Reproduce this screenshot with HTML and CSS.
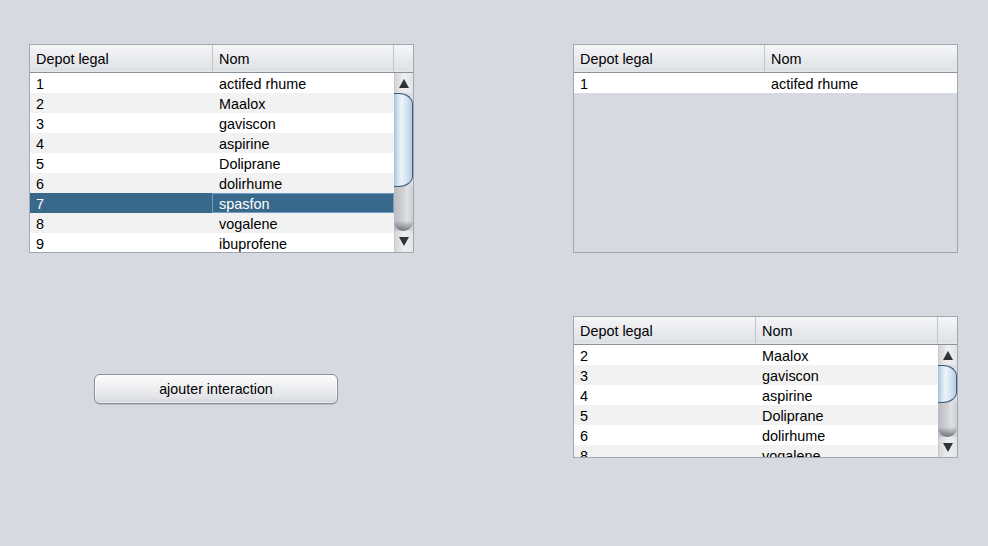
FILE: index.html
```html
<!DOCTYPE html>
<html>
<head>
<meta charset="utf-8">
<link rel="stylesheet" href="styles.css">
</head>
<body>
<div class="page">
  <div class="table t1">
    <div class="thead">
      <div class="th c1">Depot legal</div>
      <div class="th c2">Nom</div>
      <div class="th corner"></div>
    </div>
    <div class="tbody">
      <div class="rows">
        <div class="row"><div class="td c1">1</div><div class="td c2">actifed rhume</div></div>
        <div class="row alt"><div class="td c1">2</div><div class="td c2">Maalox</div></div>
        <div class="row"><div class="td c1">3</div><div class="td c2">gaviscon</div></div>
        <div class="row alt"><div class="td c1">4</div><div class="td c2">aspirine</div></div>
        <div class="row"><div class="td c1">5</div><div class="td c2">Doliprane</div></div>
        <div class="row alt"><div class="td c1">6</div><div class="td c2">dolirhume</div></div>
        <div class="row sel"><div class="td c1">7</div><div class="td c2 focus">spasfon</div></div>
        <div class="row alt"><div class="td c1">8</div><div class="td c2">vogalene</div></div>
        <div class="row"><div class="td c1">9</div><div class="td c2">ibuprofene</div></div>
      </div>
      <div class="sb">
        <div class="sb-btn"><span class="arr up"></span></div>
        <div class="sb-thumb"></div>
        <div class="sb-track"></div>
        <div class="sb-btn down"><span class="arr dn"></span></div>
      </div>
    </div>
  </div>

  <div class="table t2">
    <div class="thead">
      <div class="th c1">Depot legal</div>
      <div class="th c2 last">Nom</div>
    </div>
    <div class="tbody">
      <div class="rows">
        <div class="row"><div class="td c1">1</div><div class="td c2">actifed rhume</div></div>
      </div>
    </div>
  </div>

  <div class="btn-cell">
    <button class="btn" type="button">ajouter interaction</button>
  </div>

  <div class="table t3">
    <div class="thead">
      <div class="th c1">Depot legal</div>
      <div class="th c2">Nom</div>
      <div class="th corner"></div>
    </div>
    <div class="tbody">
      <div class="rows">
        <div class="row"><div class="td c1">2</div><div class="td c2">Maalox</div></div>
        <div class="row alt"><div class="td c1">3</div><div class="td c2">gaviscon</div></div>
        <div class="row"><div class="td c1">4</div><div class="td c2">aspirine</div></div>
        <div class="row alt"><div class="td c1">5</div><div class="td c2">Doliprane</div></div>
        <div class="row"><div class="td c1">6</div><div class="td c2">dolirhume</div></div>
        <div class="row alt"><div class="td c1">8</div><div class="td c2">vogalene</div></div>
      </div>
      <div class="sb">
        <div class="sb-btn"><span class="arr up"></span></div>
        <div class="sb-thumb"></div>
        <div class="sb-track"></div>
        <div class="sb-btn down"><span class="arr dn"></span></div>
      </div>
    </div>
  </div>
</div>
</body>
</html>
```

FILE: styles.css
```css
* { box-sizing: border-box; }
html, body {
  margin: 0;
  padding: 0;
  background: #d6d9df;
  width: 988px;
  height: 546px;
  overflow: hidden;
}
body {
  font-family: "Liberation Sans", Arial, sans-serif;
  font-size: 14.4px;
  color: #000;
}
.page {
  display: grid;
  grid-template-columns: 385px 385px;
  column-gap: 159px;
  align-items: start;
  padding: 44px 0 0 29px;
}

/* table */
.table {
  border: 1px solid #a3a7af;
  display: flex;
  flex-direction: column;
  background: #d6d9df;
  overflow: hidden;
}
.t1, .t2 { height: 209px; }
.t3 { height: 142px; margin-top: 63px; }

.thead {
  display: flex;
  height: 28px;
  border-bottom: 1px solid #8d929a;
  background: linear-gradient(#f5f6f8 0%, #eceef1 35%, #e1e4e8 80%, #dcdfe4 96%, #eef0f2 100%);
  flex: none;
}
.th {
  height: 27px;
  line-height: 29px;
  padding-left: 6px;
  border-right: 1px solid #c3c6cc;
  white-space: nowrap;
  overflow: hidden;
}
.th.last { border-right: none; flex: 1; }
.th.corner { border-right: none; flex: 1; padding: 0; }
.t1 .th.c1 { width: 183px; }
.t1 .th.c2 { width: 181px; }
.t3 .th.c1 { width: 182px; }
.t3 .th.c2 { width: 182px; }
.t2 .th.c1 { width: 191px; }

.tbody {
  flex: 1;
  display: flex;
  min-height: 0;
}
.rows {
  flex: 1;
  overflow: hidden;
}
.row {
  display: flex;
  height: 20px;
  background: #fff;
}
.row.alt { background: #f2f2f2; }
.row.sel { background: #39698a; color: #fff; }
.td {
  height: 20px;
  line-height: 22px;
  padding-left: 6px;
  white-space: nowrap;
  overflow: hidden;
}
.td.c2 {
  flex: 1;
  padding-left: 6px;
  border: 1px solid transparent;
  line-height: 20px;
}
.td.focus { border-color: #6f9fc9; }
.t1 .td.c1 { width: 182px; }
.t3 .td.c1 { width: 181px; }
.t2 .td.c1 { width: 190px; }

/* scrollbar */
.sb {
  width: 19px;
  flex: none;
  display: flex;
  flex-direction: column;
  background: #dcdee2;
}
.sb-btn {
  height: 20px;
  flex: none;
  display: flex;
  align-items: center;
  justify-content: center;
  background: linear-gradient(to right, #d4d6db, #eceef0 50%, #e2e4e7);
  border-left: 1px solid #c7cace;
}
.sb-btn.down { height: 21px; }
.t3 .sb-btn.down { height: 20px; }
.arr {
  width: 0;
  height: 0;
  border-left: 5px solid transparent;
  border-right: 5px solid transparent;
}
.arr.up { border-bottom: 9px solid #2f3236; }
.arr.dn { border-top: 9px solid #2f3236; }

.sb-thumb {
  height: 94px;
  flex: none;
  border: 1px solid #3f5b75;
  border-left: none;
  border-radius: 0 14px 14px 0 / 0 11px 11px 0;
  background: linear-gradient(to right, #a6c0d8 0%, #d2e1ef 22%, #eef4fa 42%, #d6e5f2 68%, #b6cde3 100%);
}
.t3 .sb-thumb { height: 38px; }
.sb-track {
  flex: 1;
  position: relative;
  background: linear-gradient(to right, #b8bbc1 0%, #ccced3 40%, #dddfe2 70%, #cbcdd2 100%);
}
.sb-track::after {
  content: "";
  position: absolute;
  left: 0;
  right: 0;
  bottom: 0;
  height: 10px;
  border-radius: 0 0 10px 10px;
  background: linear-gradient(to bottom, rgba(90,92,96,0), rgba(60,62,66,0.65));
}

/* button */
.btn-cell {
  padding: 121px 0 0 65px;
}
.btn {
  display: block;
  width: 244px;
  height: 30px;
  padding: 0;
  margin: 0;
  border: 1px solid #8b9098;
  border-radius: 6px;
  font-family: "Liberation Sans", Arial, sans-serif;
  font-size: 14.3px;
  line-height: 27px;
  color: #000;
  text-align: center;
  background: linear-gradient(#fbfbfc 0%, #eef0f2 40%, #e2e4e8 80%, #d2d5da 100%);
  box-shadow: inset 0 0 0 1px rgba(255,255,255,0.55), 0 1px 0 rgba(120,124,130,0.35);
}
```
